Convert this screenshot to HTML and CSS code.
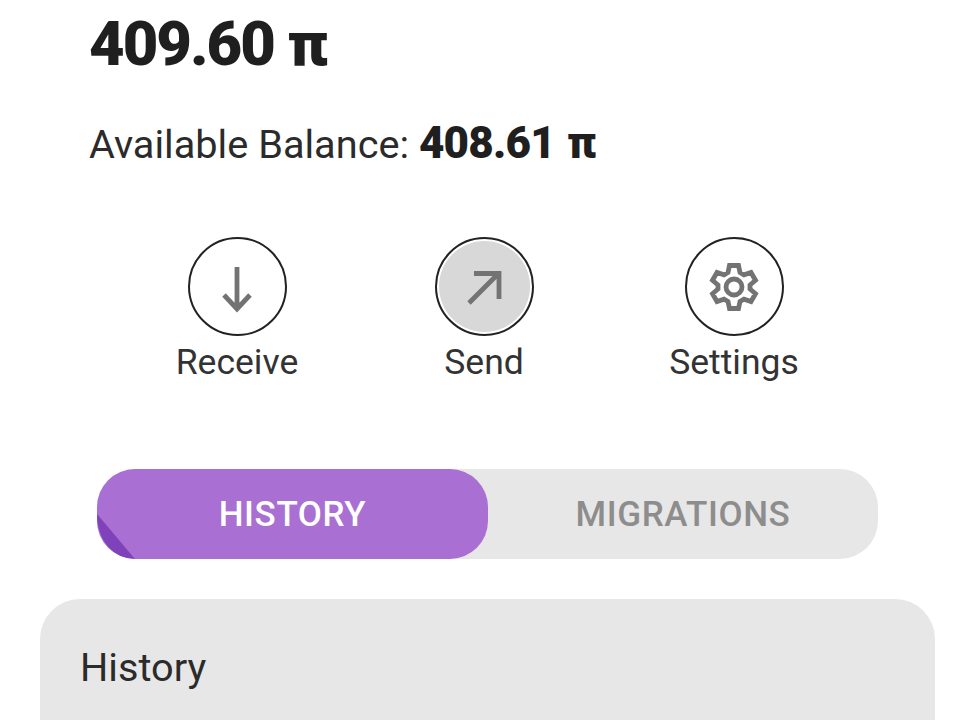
FILE: index.html
```html
<!DOCTYPE html>
<html lang="en">
<head>
<meta charset="utf-8">
<title>Wallet</title>
<link rel="stylesheet" href="styles.css">
</head>
<body>
<main class="page">
  <section class="balance">
    <h1 class="total">409.60 π</h1>
    <p class="available">Available Balance: <strong>408.61 π</strong></p>
  </section>
  <nav class="actions">
    <div class="action action-receive">
      <span class="circle">
        <svg class="icon" viewBox="0 0 48 48"><path d="M24 4V45M11 32L24 46L37 32" /></svg>
      </span>
      <span class="label">Receive</span>
    </div>
    <div class="action action-send">
      <span class="circle circle-active">
        <svg class="icon" viewBox="0 0 48 48"><path d="M9 40L39 10M14 10.500H39V36" /></svg>
      </span>
      <span class="label">Send</span>
    </div>
    <div class="action action-settings">
      <span class="circle">
        <svg class="icon" viewBox="0 0 48 48">
          <path class="gear" d="M19.500 2.500H28.500L30 9.500L34 11.800L41 9.500L45.500 17.300L40 22V26L45.500 30.700L41 38.500L34 36.200L30 38.500L28.500 45.500H19.500L18 38.500L14 36.200L7 38.500L2.500 30.700L8 26V22L2.500 17.300L7 9.500L14 11.800L18 9.500Z" />
          <circle class="gear" cx="24" cy="24" r="8" />
        </svg>
      </span>
      <span class="label">Settings</span>
    </div>
  </nav>
  <div class="tabs">
    <div class="tab tab-active">
      <svg class="fold" viewBox="0 0 40 45"><path d="M0 0L38 45C16 45 0 26 0 0Z" /></svg>
      <span class="tab-text">HISTORY</span>
    </div>
    <div class="tab"><span class="tab-text">MIGRATIONS</span></div>
  </div>
  <section class="card">
    <h2 class="card-title">History</h2>
  </section>
</main>
</body>
</html>
```
FILE: styles.css
```css
* { box-sizing: border-box; }
html, body { margin: 0; height: 720px; overflow: hidden; background: #fff; }
body { font-family: Roboto, "Liberation Sans", sans-serif; color: #2b2b2b; }
.page { display: flex; flex-direction: column; height: 720px; overflow: hidden; }
.balance { padding: 9px 0 0 89px; }
.total { margin: 0; font-size: 61.5px; line-height: 70px; font-weight: 900; letter-spacing: -2px; color: #1f1f1f; }
.available { margin: 35px 0 0; font-size: 39.7px; line-height: 58px; font-weight: 400; }
.available strong { font-size: 44px; font-weight: 900; letter-spacing: -0.8px; word-spacing: 2px; color: #1f1f1f; }
.actions { display: grid; grid-template-columns: 200px 200px 200px; justify-content: start; column-gap: 47px; margin: 63px 0 0 137px; }
.action { display: flex; flex-direction: column; align-items: center; }
.action-settings { margin-left: 6px; }
.circle { width: 99px; height: 99px; border: 2px solid #222; border-radius: 50%; display: flex; align-items: center; justify-content: center; background: #fff; }
.circle-active { background: #d8d8d8; box-shadow: inset 0 0 0 2px #fff; }
.icon { width: 48px; height: 48px; overflow: visible; fill: none; stroke: #737373; stroke-width: 4.800; }
.label { margin-top: 4px; font-size: 35.5px; line-height: 44px; color: #333; }
.tabs { display: flex; margin: 85px 0 0 97px; width: 781px; height: 90px; background: #e8e7e7; border-radius: 38px; }
.tab { position: relative; flex: 1; display: flex; align-items: center; justify-content: center; font-size: 35px; font-weight: 500; letter-spacing: 0.6px; color: #8d8d8d; border-radius: 38px; overflow: hidden; }
.tab-active { flex: 0 0 391px; background: #a96fd2; color: #fff; }
.fold { position: absolute; left: 0; bottom: 0; width: 40px; height: 45px; fill: #7f42bb; stroke: none; }
.tab-text { position: relative; }
.card { margin: 40px 0 0 40px; width: 895px; flex: 1; padding: 45px 40px 0; background: #e8e7e7; border-radius: 40px 40px 0 0; }
.card-title { margin: 0; font-size: 39.7px; line-height: 48px; font-weight: 400; color: #2b2b2b; }
```
